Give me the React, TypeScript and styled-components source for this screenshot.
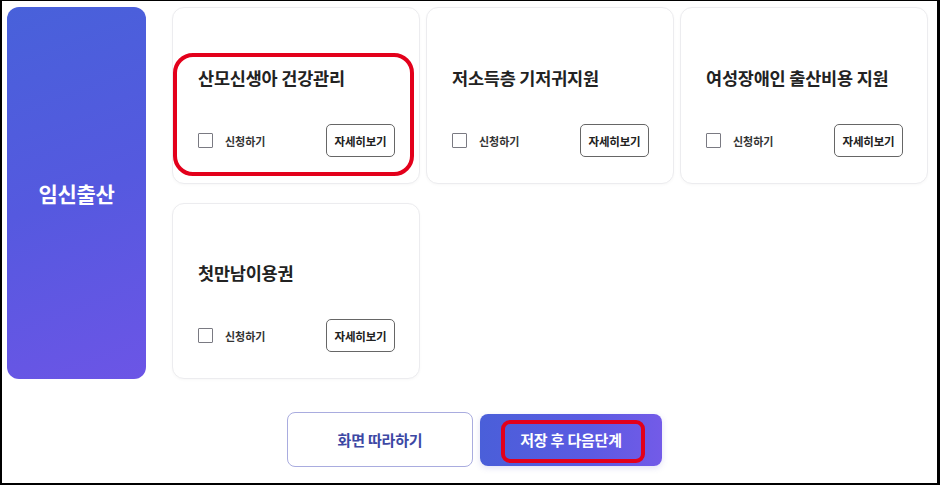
import styled, { createGlobalStyle } from 'styled-components';

type Service = {
  title: string;
  highlight?: boolean;
};

const services: Service[] = [
  { title: '산모신생아 건강관리', highlight: true },
  { title: '저소득층 기저귀지원' },
  { title: '여성장애인 출산비용 지원' },
  { title: '첫만남이용권' },
];

const GlobalStyle = createGlobalStyle`
  html, body {
    margin: 0;
    padding: 0;
    background: #fff;
  }
  body {
    font-family: 'Noto Sans CJK KR', 'Noto Sans', sans-serif;
    color: #222;
  }
`;

const Frame = styled.div`
  box-sizing: border-box;
  width: 940px;
  height: 485px;
  border-style: solid;
  border-color: #000;
  border-width: 1px 3px 2px 2px;
  padding: 6px 0 0 5px;
  background: #fff;
  overflow: hidden;
`;

const Board = styled.div`
  display: flex;
  gap: 26px;
  height: 372px;
`;

const Category = styled.div`
  flex: 0 0 139px;
  display: flex;
  align-items: center;
  justify-content: center;
  border-radius: 12px;
  background: linear-gradient(160deg, #4861da 0%, #5559df 50%, #6c55e6 100%);
  color: #fff;
  font-size: 21px;
  font-weight: 700;
  letter-spacing: -0.3px;
`;

const CardGrid = styled.div`
  display: grid;
  grid-template-columns: repeat(3, 248px);
  grid-template-rows: 177px 176px;
  column-gap: 6px;
  row-gap: 19px;
`;

const Card = styled.div`
  position: relative;
  box-sizing: border-box;
  display: flex;
  flex-direction: column;
  justify-content: flex-end;
  padding: 0 24px 26px 25px;
  border: 1px solid #ececef;
  border-radius: 12px;
  background: #fff;
  box-shadow: 0 1px 3px rgba(0, 0, 0, 0.03);
`;

const Title = styled.h3`
  margin: 0 0 34px;
  font-size: 17.5px;
  line-height: 24px;
  font-weight: 700;
  color: #222;
  letter-spacing: -0.2px;
`;

const Actions = styled.div`
  display: flex;
  align-items: center;
  justify-content: space-between;
  height: 33px;
`;

const Apply = styled.label`
  display: flex;
  align-items: center;
  gap: 12px;
  font-size: 11px;
  font-weight: 600;
  color: #333;
`;

const Box = styled.span`
  box-sizing: border-box;
  width: 15px;
  height: 15px;
  border: 1px solid #7a7a82;
  border-radius: 1px;
  background: #fff;
`;

const Detail = styled.button`
  box-sizing: border-box;
  width: 69px;
  height: 33px;
  padding: 0;
  border: 1px solid #666;
  border-radius: 5px;
  background: #fff;
  font-family: inherit;
  font-size: 11.5px;
  font-weight: 600;
  color: #222;
  letter-spacing: -0.2px;
`;

const Mark = styled.span<{ $top: number; $left: number; $w: number; $h: number; $r: number }>`
  position: absolute;
  top: ${(p) => p.$top}px;
  left: ${(p) => p.$left}px;
  width: ${(p) => p.$w}px;
  height: ${(p) => p.$h}px;
  box-sizing: border-box;
  border: 4px solid #e3001b;
  border-radius: ${(p) => p.$r}px;
  pointer-events: none;
`;

const Footer = styled.div`
  display: flex;
  justify-content: center;
  align-items: center;
  gap: 7px;
  margin-top: 33px;
  padding-left: 5px;
`;

const Button = styled.button<{ $primary?: boolean }>`
  position: relative;
  box-sizing: border-box;
  border-radius: 8px;
  font-family: inherit;
  font-size: 15px;
  font-weight: 700;
  letter-spacing: -0.2px;
  width: ${(p) => (p.$primary ? '182px' : '186px')};
  height: ${(p) => (p.$primary ? '52px' : '55px')};
  border: ${(p) => (p.$primary ? 'none' : '1px solid #a9acdf')};
  color: ${(p) => (p.$primary ? '#fff' : '#3d48a4')};
  background: ${(p) => (p.$primary ? 'linear-gradient(90deg, #4a5fd9 0%, #5b5ae2 60%, #735be8 100%)' : '#fff')};
  box-shadow: ${(p) => (p.$primary ? '0 2px 6px rgba(90, 90, 200, 0.18)' : 'none')};
`;

export default function App() {
  return (
    <>
      <GlobalStyle />
      <Frame>
        <Board>
          <Category>임신출산</Category>
          <CardGrid>
            {services.map((s) => (
              <Card key={s.title}>
                {s.highlight && <Mark $top={45} $left={0} $w={241} $h={123} $r={20} />}
                <Title>{s.title}</Title>
                <Actions>
                  <Apply>
                    <Box />
                    신청하기
                  </Apply>
                  <Detail>자세히보기</Detail>
                </Actions>
              </Card>
            ))}
          </CardGrid>
        </Board>
        <Footer>
          <Button>화면 따라하기</Button>
          <Button $primary>
            <Mark $top={6} $left={21} $w={144} $h={43} $r={9} />
            저장 후 다음단계
          </Button>
        </Footer>
      </Frame>
    </>
  );
}
